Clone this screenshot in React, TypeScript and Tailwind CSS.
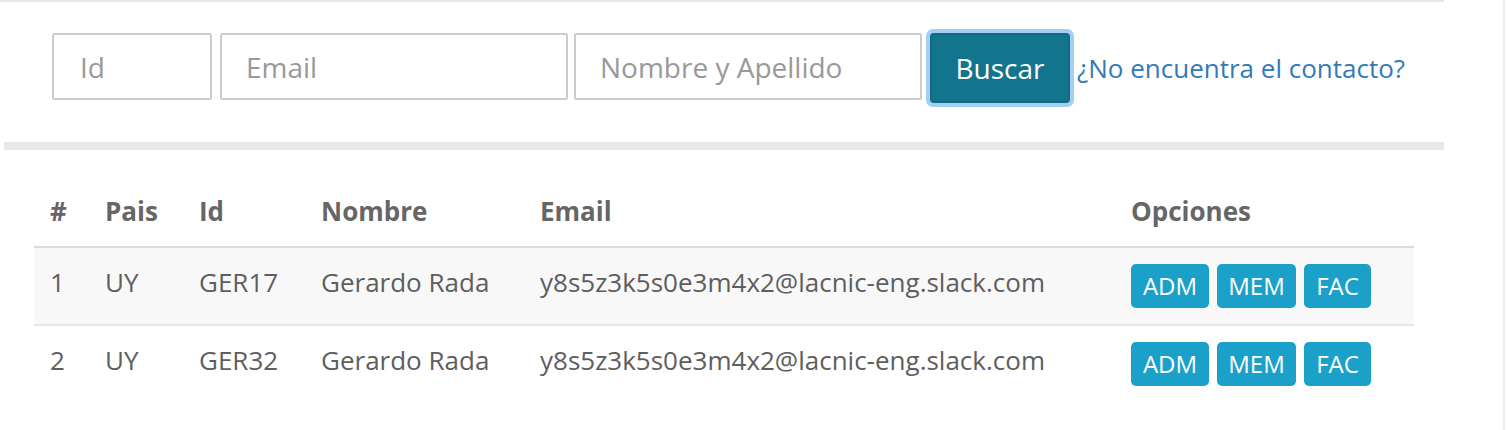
import React from "react";

const rows = [
  { n: "1", pais: "UY", id: "GER17", nombre: "Gerardo Rada", email: "y8s5z3k5s0e3m4x2@lacnic-eng.slack.com", striped: true },
  { n: "2", pais: "UY", id: "GER32", nombre: "Gerardo Rada", email: "y8s5z3k5s0e3m4x2@lacnic-eng.slack.com", striped: false },
];

function OptBtn({ label, w }: { label: string; w: string }) {
  return (
    <span className={`inline-flex h-[44px] ${w} items-center justify-center rounded-[5px] bg-[#1ba1c9] text-[24px] text-white`}>
      {label}
    </span>
  );
}

export default function App() {
  return (
    <div className="flex h-[430px] w-[1506px] overflow-hidden bg-white font-['Open_Sans',sans-serif]">
      <div className="w-[1503px]">
        <div className="h-[2px] w-[1444px] bg-[#e6e9ec]" />
        <div className="flex h-[140px] items-start pl-[52px] pt-[31px]">
          <div className="flex h-[67px] w-[160px] items-center rounded-[2px] border-2 border-[#cccccc] pl-[26px] text-[28px] text-[#999]">
            Id
          </div>
          <div className="ml-[8px] flex h-[67px] w-[348px] items-center rounded-[2px] border-2 border-[#cccccc] pl-[24px] text-[28px] text-[#999]">
            Email
          </div>
          <div className="ml-[6px] flex h-[67px] w-[348px] items-center rounded-[2px] border-2 border-[#cccccc] pl-[24px] text-[28px] text-[#999]">
            Nombre y Apellido
          </div>
          <div className="-mt-[4px] ml-[4px] rounded-[7px] bg-[#a3cff5] p-[4px]">
            <div className="flex h-[70px] w-[140px] items-center justify-center rounded-[4px] border-2 border-[#0f6a82] bg-[#12748d] text-[28px] text-white">
              Buscar
            </div>
          </div>
          <div className="flex h-[70px] items-center">
            <span className="ml-[3px] text-[26px] text-[#337ab7]">¿No encuentra el contacto?</span>
          </div>
        </div>
        <div className="ml-[4px] h-[8px] w-[1440px] bg-[#e6e9ec]" />
        <div className="ml-[34px] mt-[30px] w-[1380px] text-[26px] text-[#5e5e5e]">
          <div className="flex h-[68px] items-center border-b-2 border-[#dddddd] pb-[4px] font-bold text-[#666]">
            <div className="w-[71px] pl-[16px]">#</div>
            <div className="w-[94px]">Pais</div>
            <div className="w-[122px]">Id</div>
            <div className="w-[219px]">Nombre</div>
            <div className="w-[591px]">Email</div>
            <div>Opciones</div>
          </div>
          {rows.map((r) => (
            <div
              key={r.n}
              className={`flex h-[78px] items-center border-b-2 ${r.striped ? "border-[#e6e9ec] bg-[#f8f8f8]" : "border-transparent"}`}
            >
              <div className="flex pb-[8px]">
                <div className="w-[71px] pl-[16px]">{r.n}</div>
                <div className="w-[94px]">{r.pais}</div>
                <div className="w-[122px]">{r.id}</div>
                <div className="w-[219px]">{r.nombre}</div>
                <div className="w-[591px]">{r.email}</div>
              </div>
              <div className="flex gap-[8px]">
                <OptBtn label="ADM" w="w-[78px]" />
                <OptBtn label="MEM" w="w-[79px]" />
                <OptBtn label="FAC" w="w-[67px]" />
              </div>
            </div>
          ))}
        </div>
      </div>
      <div className="w-[2px] bg-[#ececec]" />
    </div>
  );
}
